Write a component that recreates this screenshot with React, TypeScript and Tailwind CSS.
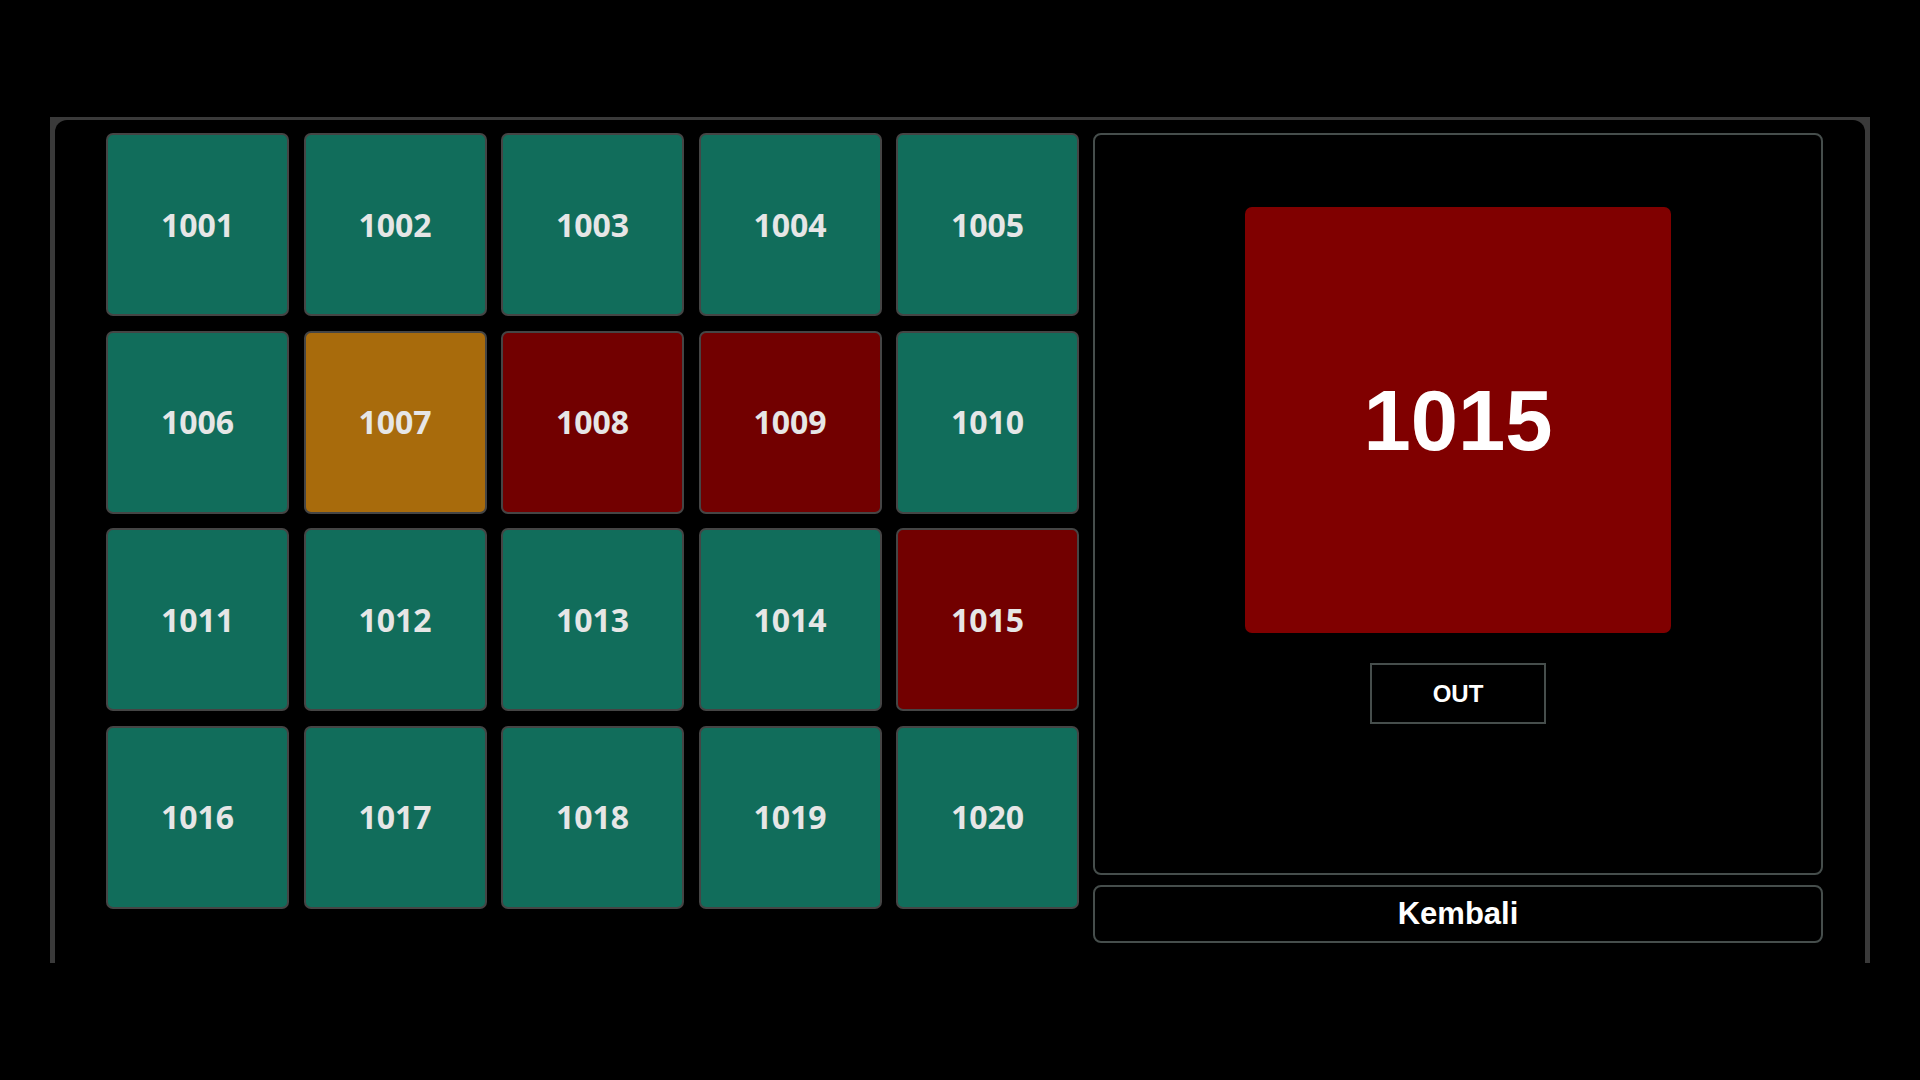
const ROOMS = [
  { no: '1001', state: 'free' },
  { no: '1002', state: 'free' },
  { no: '1003', state: 'free' },
  { no: '1004', state: 'free' },
  { no: '1005', state: 'free' },
  { no: '1006', state: 'free' },
  { no: '1007', state: 'pending' },
  { no: '1008', state: 'busy' },
  { no: '1009', state: 'busy' },
  { no: '1010', state: 'free' },
  { no: '1011', state: 'free' },
  { no: '1012', state: 'free' },
  { no: '1013', state: 'free' },
  { no: '1014', state: 'free' },
  { no: '1015', state: 'busy' },
  { no: '1016', state: 'free' },
  { no: '1017', state: 'free' },
  { no: '1018', state: 'free' },
  { no: '1019', state: 'free' },
  { no: '1020', state: 'free' },
];

const TILE_BG: Record<string, string> = {
  free: 'bg-[#116d5b]',
  pending: 'bg-[#a86b0c]',
  busy: 'bg-[#720000]',
};

export default function App() {
  return (
    <div className="min-h-screen w-full bg-black pt-[117px] pl-[50px]">
      {/* frame */}
      <div className="w-[1820px] h-[846px] bg-[#3a3a3a] pt-[3px] px-[5px]">
        <div className="h-full bg-black rounded-t-[12px] flex items-start pt-[13px] pl-[51px] gap-[14px]">

          {/* room grid */}
          <div className="grid grid-cols-5 gap-[14.5px]">
            {ROOMS.map(r => (
              <button
                key={r.no}
                className={`w-[183px] h-[183px] rounded-[7px] border-2 border-[#454545] flex items-center justify-center text-[32px] font-bold text-[#e6e6e6] ${TILE_BG[r.state]}`}
                style={{ fontFamily: '"Open Sans", sans-serif' }}
              >
                {r.no}
              </button>
            ))}
          </div>

          {/* detail panel */}
          <div className="w-[730px] flex flex-col gap-[10px]" style={{ fontFamily: '"Liberation Sans", Arial, sans-serif' }}>
            <div className="h-[742px] rounded-[8px] border-2 border-[#464e4c] flex flex-col items-center pt-[72px]">
              <div className="w-[426px] h-[426px] rounded-[7px] bg-[#800000] flex items-center justify-center">
                <span className="text-[85px] font-bold text-white leading-none">1015</span>
              </div>
              <button className="mt-[30px] w-[176px] h-[61px] border-2 border-[#464e4c] text-white font-bold text-[24px]">
                OUT
              </button>
            </div>
            <button className="h-[58px] rounded-[8px] border-2 border-[#464e4c] text-white font-bold text-[31px]">
              Kembali
            </button>
          </div>

        </div>
      </div>
    </div>
  );
}
